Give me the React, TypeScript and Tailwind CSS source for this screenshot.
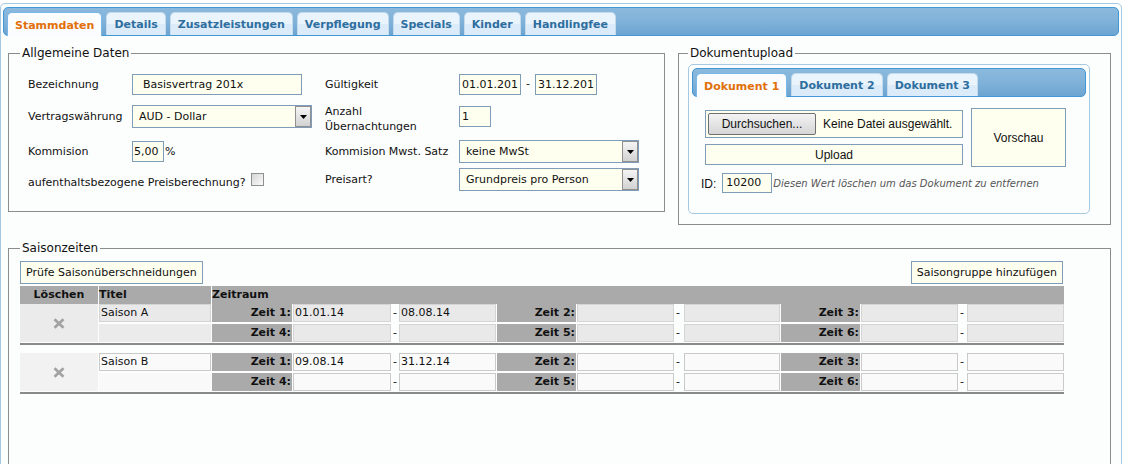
import React from "react";

const FIELD = "border border-[#7f9db9] bg-[#fffff0]";
const COLS =
  "grid grid-cols-[78px_112px_80px_98px_6px_97px_79px_97px_8px_96px_79px_97px_7px_97px] gap-x-[1px]";

function Tab({ label, active }: { label: string; active?: boolean }) {
  if (active) {
    return (
      <div className="h-[24px] -mb-[1px] px-[7px] pt-[4px] flex items-center rounded-t-[5px] border border-b-0 border-[#79b7e7] bg-[#fbfcfd] text-[#e17009] font-bold">
        {label}
      </div>
    );
  }
  return (
    <div className="h-[23px] px-[7px] pt-[3px] flex items-center rounded-t-[5px] border border-b-0 border-[#c5dbec] bg-linear-to-b from-[#eaf4fc] from-50% to-[#dbebf9] to-50% text-[#2e6e9e] font-bold">
      {label}
    </div>
  );
}

function TabBar({ tabs }: { tabs: string[] }) {
  return (
    <div className="h-[29px] rounded-[5px] border border-[#4297d7] bg-linear-to-b from-[#8cb9dd] via-[#80b2d9] to-[#6ca4d1] flex items-end gap-[4px] pl-[3px]">
      {tabs.map((t, i) => (
        <Tab key={t} label={t} active={i === 0} />
      ))}
    </div>
  );
}

function Select({ value, width }: { value: string; width: string }) {
  return (
    <div className={`${width} h-[23px] ${FIELD} flex items-center pl-[6px]`}>
      <span className="flex-1 whitespace-nowrap pt-[1px]">{value}</span>
      <div className="w-[16px] h-[21px] border border-[#8f8f8f] bg-linear-to-b from-[#f5f5f5] to-[#d2d2d2] flex items-center justify-center">
        <svg width="7" height="4" viewBox="0 0 7 4">
          <path d="M0 0h7L3.5 4z" fill="#000" />
        </svg>
      </div>
    </div>
  );
}

function Dash() {
  return <div className="flex items-center pl-[1px]">-</div>;
}

function Season({ title, from, to, muted }: { title: string; from: string; to: string; muted?: boolean }) {
  const box = muted
    ? "bg-[#e9e9e9] border border-[#d4d4d4] flex items-center pl-[1px] pt-[1px]"
    : "bg-[#fafafa] border border-[#cacaca] flex items-center pl-[1px] pt-[1px]";
  const lbl = "bg-[#aaaaaa] font-bold flex items-center justify-end pr-[1px] pt-[1px]";
  return (
    <div className={`${COLS} w-[1044px] grid-rows-[18px_18px] gap-y-[2px] pb-[1px] border-b-2 border-[#8a8a8a]`}>
      <div className={`row-span-2 flex items-center justify-center ${muted ? "bg-[#ebebeb]" : "bg-[#f2f2f2]"}`}>
        <svg width="12" height="11" viewBox="0 0 12 11">
          <path d="M1.5 1.2l9 8.6M10.5 1.2l-9 8.6" stroke="#a2a2a2" strokeWidth="2.6" />
        </svg>
      </div>
      <div className={box}>{title}</div>
      <div className={lbl}>Zeit 1:</div>
      <div className={box}>{from}</div>
      <Dash />
      <div className={box}>{to}</div>
      <div className={lbl}>Zeit 2:</div>
      <div className={box} />
      <Dash />
      <div className={box} />
      <div className={lbl}>Zeit 3:</div>
      <div className={box} />
      <Dash />
      <div className={box} />

      <div className={muted ? "bg-[#ebebeb]" : "bg-[#f9f9f9]"} />
      <div className={lbl}>Zeit 4:</div>
      <div className={box} />
      <Dash />
      <div className={box} />
      <div className={lbl}>Zeit 5:</div>
      <div className={box} />
      <Dash />
      <div className={box} />
      <div className={lbl}>Zeit 6:</div>
      <div className={box} />
      <Dash />
      <div className={box} />
    </div>
  );
}

export default function App() {
  return (
    <div className="w-[1136px] h-[464px] overflow-hidden bg-white font-['DejaVu_Sans',sans-serif] text-[11px] text-[#111]">
      <div className="mt-[3px] w-[1122px] h-[520px] rounded-[5px] border border-[#a6c9e2] bg-[#fcfdfd] p-[2px] pt-[3px]">
        <TabBar tabs={["Stammdaten", "Details", "Zusatzleistungen", "Verpflegung", "Specials", "Kinder", "Handlingfee"]} />

        <div className="pl-[5px] pt-[10px]">
          {/* top row */}
          <div className="flex items-start gap-[13px]">
            {/* Allgemeine Daten */}
            <fieldset className="w-[657px] border border-[#8c8c8c] px-[11px] pb-[19px]">
              <legend className="px-[2px] text-[12px] leading-[14px]">Allgemeine Daten</legend>
              <div className="mt-[12px] pl-[8px] grid grid-cols-[104px_193px_134px_1fr] grid-rows-[25px_39px_31px_25px] items-center">
                <div className="pt-[2px]">Bezeichnung</div>
                <div className={`w-[170px] h-[21px] ${FIELD} flex items-center pl-[10px] pt-[1px]`}>Basisvertrag 201x</div>
                <div className="pt-[2px]">Gültigkeit</div>
                <div className="flex items-center">
                  <div className={`w-[62px] h-[21px] ${FIELD} flex items-center pl-[2px] pt-[1px] overflow-hidden whitespace-nowrap`}>01.01.201</div>
                  <span className="mx-[5px]">-</span>
                  <div className={`w-[62px] h-[21px] ${FIELD} flex items-center pl-[2px] pt-[1px] overflow-hidden whitespace-nowrap`}>31.12.201</div>
                </div>

                <div className="pt-[2px]">Vertragswährung</div>
                <Select value="AUD - Dollar" width="w-[180px]" />
                <div className="pt-[5px] leading-[15px]">
                  Anzahl
                  <br />
                  Übernachtungen
                </div>
                <div className={`w-[32px] h-[21px] ${FIELD} flex items-center pl-[2px] pt-[1px]`}>1</div>

                <div className="pt-[2px]">Kommision</div>
                <div className="flex items-center">
                  <div className={`w-[32px] h-[21px] ${FIELD} flex items-center pl-[1px] pt-[1px]`}>5,00</div>
                  <span className="ml-[1px] pt-[2px]">%</span>
                </div>
                <div className="pt-[2px]">Kommision Mwst. Satz</div>
                <Select value="keine MwSt" width="w-[180px]" />

                <div className="col-span-2 flex items-center">
                  <span className="mt-[7px]">aufenthaltsbezogene Preisberechnung?</span>
                  <div className="ml-[5px] w-[13px] h-[13px] border border-[#8e8f8f] bg-linear-to-br from-[#d6d6d6] to-[#fbfbfb]" />
                </div>
                <div className="pt-[1px]">Preisart?</div>
                <Select value="Grundpreis pro Person" width="w-[180px]" />
              </div>
            </fieldset>

            {/* Dokumentupload */}
            <fieldset className="w-[433px] border border-[#8c8c8c] px-[9px] pb-[10px]">
              <legend className="px-[2px] text-[12px] leading-[14px]">Dokumentupload</legend>
              <div className="mt-[4px] w-[402px] rounded-[5px] border border-[#a6c9e2] bg-[#fcfdfd] p-[3px] pb-[20px]">
                <TabBar tabs={["Dokument 1", "Dokument 2", "Dokument 3"]} />
                <div className="font-['Liberation_Sans',Arial,sans-serif] text-[12px]">
                  <div className="mt-[11px] ml-[13px] flex items-center gap-[8px]">
                    <div className="flex flex-col gap-[6px]">
                      <div className={`w-[258px] h-[28px] ${FIELD} flex items-center pl-[2px] overflow-hidden whitespace-nowrap`}>
                        <div className="w-[108px] h-[22px] shrink-0 rounded-[2px] border border-[#707070] bg-linear-to-b from-[#f3f3f3] to-[#d6d6d6] flex items-center justify-center">
                          Durchsuchen...
                        </div>
                        <span className="ml-[7px]">Keine Datei ausgewählt.</span>
                      </div>
                      <div className={`w-[258px] h-[21px] ${FIELD} flex items-center justify-center`}>Upload</div>
                    </div>
                    <div className={`w-[95px] h-[59px] ${FIELD} flex items-center justify-center`}>Vorschau</div>
                  </div>
                  <div className="mt-[6px] ml-[9px] flex items-center">
                    <span className="pt-[1px]">ID:</span>
                    <div className={`ml-[6px] w-[50px] h-[20px] ${FIELD} flex items-center pl-[3px] pt-[1px] font-['DejaVu_Sans',sans-serif] text-[11px]`}>
                      10200
                    </div>
                    <span className="ml-[1px] pt-[1px] font-['DejaVu_Sans',sans-serif] italic text-[10px] text-[#555]">
                      Diesen Wert löschen um das Dokument zu entfernen
                    </span>
                  </div>
                </div>
              </div>
            </fieldset>
          </div>

          {/* Saisonzeiten */}
          <fieldset className="mt-[16px] w-[1103px] h-[260px] border border-[#8c8c8c] px-[11px]">
            <legend className="px-[2px] text-[12px] leading-[14px]">Saisonzeiten</legend>
            <div className="mt-[6px] w-[1044px] flex justify-between">
              <div className={`h-[23px] px-[5px] pt-[1px] ${FIELD} flex items-center`}>Prüfe Saisonüberschneidungen</div>
              <div className={`h-[23px] px-[5px] pt-[1px] mr-[1px] ${FIELD} flex items-center`}>Saisongruppe hinzufügen</div>
            </div>
            <div className={`${COLS} w-[1044px] mt-[2px] h-[17px] font-bold`}>
              <div className="bg-[#aaaaaa] flex items-center justify-center pt-[1px]">Löschen</div>
              <div className="bg-[#aaaaaa] flex items-center pt-[1px]">Titel</div>
              <div className="col-span-12 bg-[#aaaaaa] flex items-center pt-[1px]">Zeitraum</div>
            </div>
            <div className="mt-[1px]">
              <Season title="Saison A" from="01.01.14" to="08.08.14" muted />
            </div>
            <div className="mt-[8px]">
              <Season title="Saison B" from="09.08.14" to="31.12.14" />
            </div>
          </fieldset>
        </div>
      </div>
    </div>
  );
}
